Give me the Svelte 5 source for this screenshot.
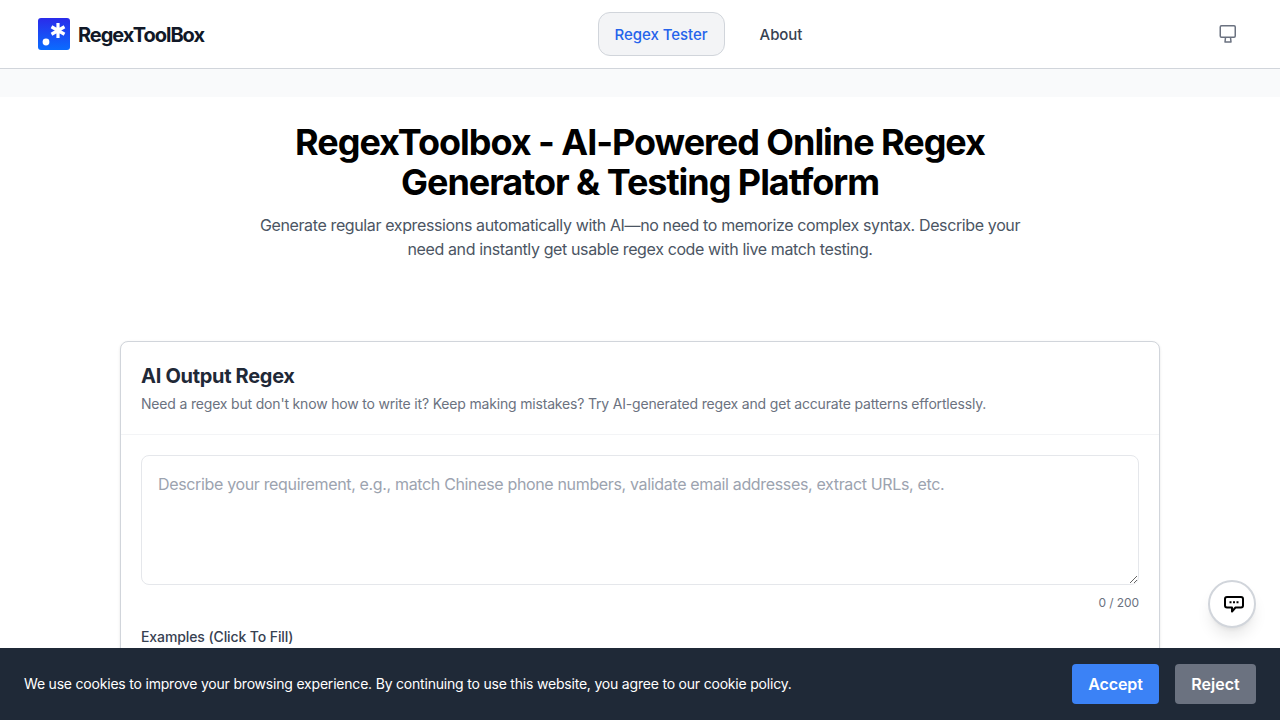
<script lang="ts">
  const navLinks = [
    { label: "Regex Tester", active: true },
    { label: "About", active: false },
  ];
</script>

<div class="page">
  <header class="topbar">
    <a class="brand" href="#home">
      <svg class="logo" viewBox="0 0 32 32" width="32" height="32" aria-hidden="true">
        <defs>
          <linearGradient id="logo-bg" x1="0" y1="0" x2="0" y2="1">
            <stop offset="0" stop-color="#2a2bea" />
            <stop offset="1" stop-color="#0a6cff" />
          </linearGradient>
        </defs>
        <rect width="32" height="32" rx="3" fill="url(#logo-bg)" />
        <circle cx="8" cy="24" r="3.4" fill="#fff" />
        <path d="M20 5v15M13.500 8.750l13 7.500M26.500 8.750l-13 7.500" stroke="#fff" stroke-width="3.2" fill="none" />
      </svg>
      <span>RegexToolBox</span>
    </a>
    <nav class="nav">
      {#each navLinks as link}
        <a class={{ "nav-link": true, active: link.active }} href="#home">{link.label}</a>
      {/each}
    </nav>
    <button class="theme" aria-label="Theme">
      <svg viewBox="0 0 20 20" width="20" height="20" fill="none" stroke="#6b7280" stroke-width="1.5" stroke-linejoin="round">
        <rect x="2.25" y="1.75" width="15" height="11.500" rx="1.200" />
        <path d="M7.500 13.500 7 18h6l-.5-4.500" />
      </svg>
    </button>
  </header>

  <div class="band"></div>

  <main>
    <section class="hero">
      <h1>RegexToolbox - AI-Powered Online Regex Generator &amp; Testing Platform</h1>
      <p>Generate regular expressions automatically with AI—no need to memorize complex syntax. Describe your need and instantly get usable regex code with live match testing.</p>
    </section>

    <section class="card">
      <div class="card-head">
        <h2>AI Output Regex</h2>
        <p>Need a regex but don't know how to write it? Keep making mistakes? Try AI-generated regex and get accurate patterns effortlessly.</p>
      </div>
      <div class="card-body">
        <textarea placeholder="Describe your requirement, e.g., match Chinese phone numbers, validate email addresses, extract URLs, etc."></textarea>
        <div class="counter">0 / 200</div>
        <div class="examples">Examples (Click To Fill)</div>
      </div>
    </section>
  </main>

  <button class="chat" aria-label="Feedback">
    <svg viewBox="0 0 20 18" width="20" height="18" aria-hidden="true">
      <path d="M3 2h14a2 2 0 0 1 2 2v6.500a2 2 0 0 1-2 2h-5.500L8 16.500v-4H3a2 2 0 0 1-2-2V4a2 2 0 0 1 2-2z" fill="#fff" stroke="#000" stroke-width="2" stroke-linejoin="round" />
      <path d="M5.500 7.250h2M9 7.250h2M12.500 7.250h2" stroke="#000" stroke-width="1.800" fill="none" />
    </svg>
  </button>

  <div class="cookie">
    <p>We use cookies to improve your browsing experience. By continuing to use this website, you agree to our cookie policy.</p>
    <div class="cookie-actions">
      <button class="accept">Accept</button>
      <button class="reject">Reject</button>
    </div>
  </div>
</div>

<style>
  :global(body) {
    margin: 0;
    background: #fff;
    overflow: hidden;
  }

  .page {
    height: 720px;
    overflow: hidden;
    font-family: Inter, "Noto Sans", sans-serif;
    color: #1f2937;
  }

  .topbar {
    height: 68px;
    box-sizing: content-box;
    display: flex;
    justify-content: space-between;
    align-items: center;
    padding: 0 34px 0 38px;
    background: #fff;
    border-bottom: 1px solid #d1d5db;
    box-shadow: 0 1px 2px rgba(0, 0, 0, 0.05);
  }

  .brand {
    display: flex;
    align-items: center;
    gap: 8px;
    text-decoration: none;
    color: #111827;
    font-size: 20px;
    font-weight: 650;
    letter-spacing: -1.03px;

    span {
      padding-top: 2px;
    }
  }

  .logo {
    display: block;
  }

  .nav {
    display: flex;
    align-items: center;
    gap: 18px;
    margin-left: 3px;
  }

  .nav-link {
    display: block;
    padding: 0 16px;
    height: 42px;
    line-height: 44px;
    border: 1px solid transparent;
    border-radius: 12px;
    font-size: 15px;
    font-weight: 500;
    letter-spacing: -0.05px;
    color: #374151;
    text-decoration: none;

    &.active {
      background: #f3f4f6;
      border-color: #d1d5db;
      color: #2563eb;
    }
  }

  .theme {
    width: 36px;
    height: 36px;
    display: flex;
    align-items: center;
    justify-content: center;
    padding: 0;
    background: none;
    border: 0;
  }

  .band {
    height: 28px;
    background: #f9fafb;
  }

  .hero {
    width: 768px;
    margin: 0 auto;
    padding-top: 25px;
    text-align: center;
    color: #000;

    h1 {
      margin: 0 0 11px;
      font-size: 36px;
      line-height: 40px;
      font-weight: 700;
      letter-spacing: -1.04px;
    }

    p {
      margin: 0;
      font-size: 16px;
      line-height: 24px;
      letter-spacing: -0.375px;
      color: #4b5563;
    }
  }

  .card {
    width: 1040px;
    box-sizing: border-box;
    margin: 80px auto 0;
    background: #fff;
    border: 1px solid #d1d5db;
    border-radius: 8px;
    box-shadow: 0 1px 3px rgba(0, 0, 0, 0.1);
  }

  .card-head {
    padding: 20px;
    border-bottom: 1px solid #f3f4f6;

    h2 {
      margin: 0 0 4px;
      font-size: 20px;
      line-height: 28px;
      font-weight: 650;
      color: #1f2937;
      letter-spacing: -0.3px;
    }

    p {
      margin: 0;
      font-size: 14px;
      line-height: 20px;
      letter-spacing: -0.18px;
      color: #6b7280;
    }
  }

  .card-body {
    padding: 20px;
    height: 300px;
  }

  textarea {
    display: block;
    width: 100%;
    height: 130px;
    box-sizing: border-box;
    padding: 16px;
    border: 1px solid #e5e7eb;
    border-radius: 8px;
    outline: none;
    font: inherit;
    font-size: 16px;
    line-height: 24px;
    letter-spacing: -0.345px;
    resize: vertical;
    color: #1f2937;

    &::placeholder {
      color: #9ca3af;
      opacity: 1;
    }
  }

  .counter {
    margin-top: 8px;
    text-align: right;
    font-size: 12px;
    line-height: 20px;
    letter-spacing: -0.1px;
    color: #6b7280;
  }

  .examples {
    margin-top: 14px;
    font-size: 14px;
    line-height: 20px;
    font-weight: 500;
    letter-spacing: -0.1px;
    color: #374151;
  }

  .chat {
    position: fixed;
    right: 24px;
    bottom: 92px;
    width: 48px;
    height: 48px;
    display: flex;
    align-items: center;
    justify-content: center;
    padding: 0;
    background: #fff;
    border: 2px solid #d1d5db;
    border-radius: 50%;
    box-shadow: 0 10px 15px -3px rgba(0, 0, 0, 0.1), 0 4px 6px -4px rgba(0, 0, 0, 0.1);

    svg {
      margin-left: 4px;
    }
  }

  .cookie {
    position: fixed;
    left: 0;
    right: 0;
    bottom: 0;
    height: 72px;
    display: flex;
    align-items: center;
    justify-content: space-between;
    padding: 0 24px;
    background: #1f2937;
    color: #fff;

    p {
      margin: 0;
      font-size: 14px;
      line-height: 20px;
      letter-spacing: -0.2px;
    }
  }

  .cookie-actions {
    display: flex;
    gap: 16px;

    button {
      height: 40px;
      padding: 0 16px;
      border: 0;
      border-radius: 4px;
      color: #fff;
      font: inherit;
      font-size: 16px;
      font-weight: 600;
    }

    .accept {
      min-width: 87px;
      letter-spacing: -0.1px;
      background: #3b82f6;
    }

    .reject {
      min-width: 81px;
      background: #6b7280;
    }
  }
</style>
